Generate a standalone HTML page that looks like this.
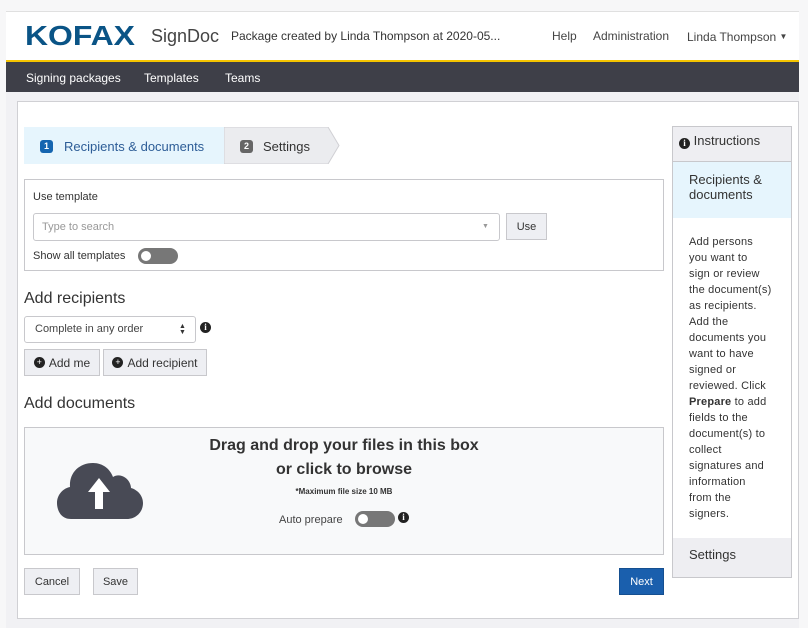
<!DOCTYPE html>
<html><head><meta charset="utf-8"><style>
*{box-sizing:border-box;margin:0;padding:0}
body{width:808px;height:628px;background:#f7f7f8;font-family:"Liberation Sans",sans-serif;color:#333;position:relative;overflow:hidden;font-size:12px}
.a{position:absolute}
.btn{position:absolute;background:#eeeff3;border:1px solid #c8c8cc;color:#333;font-size:12px;display:flex;align-items:center;justify-content:center}
.ic{display:inline-block;width:11px;height:11px;border-radius:50%;background:#222;color:#fff;font-size:9px;font-weight:bold;text-align:center;line-height:11px;font-family:"Liberation Serif",serif}
.tog{position:absolute;width:40px;height:16px;border-radius:8px;background:#777}
.tog:after{content:"";position:absolute;left:3px;top:3px;width:10px;height:10px;border-radius:50%;background:#fff}
</style></head><body>
<div class="a" style="left:6px;top:11px;width:793px;height:50px;background:#fff;border-top:1px solid #e0e0e0"></div>
<div class="a" style="left:25px;top:20px;font-size:28px;font-weight:900;color:#0a5486;letter-spacing:0px;transform:scaleX(1.14);transform-origin:left">KOFAX</div>
<div class="a" style="left:151px;top:26px;font-size:18px;color:#444">SignDoc</div>
<div class="a" style="left:231px;top:29px;font-size:12px;color:#333">Package created by Linda Thompson at 2020-05...</div>
<div class="a" style="left:552px;top:29px;font-size:12px;color:#444">Help</div>
<div class="a" style="left:593px;top:29px;font-size:12px;color:#444">Administration</div>
<div class="a" style="left:687px;top:30px;font-size:12px;color:#444">Linda Thompson <span style="font-size:8px;vertical-align:2px">▼</span></div>
<div class="a" style="left:6px;top:60px;width:793px;height:2px;background:#f5c400"></div>
<div class="a" style="left:6px;top:62px;width:793px;height:30px;background:#3e3f48"></div>
<div class="a" style="left:26px;top:71px;color:#fff;font-size:12px">Signing packages</div>
<div class="a" style="left:144px;top:71px;color:#fff;font-size:12px">Templates</div>
<div class="a" style="left:225px;top:71px;color:#fff;font-size:12px">Teams</div>
<div class="a" style="left:6px;top:92px;width:793px;height:536px;background:#f1f1f4"></div>
<div class="a" style="left:17px;top:101px;width:782px;height:518px;background:#fff;border:1px solid #d0d0d4"></div>
<!-- wizard -->
<div class="a" style="left:24px;top:127px;width:201px;height:37px;background:#e6f5fd"></div>
<div class="a" style="left:40px;top:140px;width:13px;height:13px;border-radius:3px;background:#1565b0;color:#fff;font-size:9px;text-align:center;line-height:13px;font-weight:bold">1</div>
<div class="a" style="left:64px;top:139px;font-size:13px;color:#2d5d97">Recipients &amp; documents</div>
<svg class="a" style="left:224px;top:127px" width="116" height="37"><polygon points="0,0 104,0 115,18.5 104,37 0,37" fill="#ebecef" stroke="#d0d0d4"/></svg>
<div class="a" style="left:240px;top:140px;width:13px;height:13px;border-radius:3px;background:#666;color:#fff;font-size:9px;text-align:center;line-height:13px;font-weight:bold">2</div>
<div class="a" style="left:263px;top:139px;font-size:13px;color:#333">Settings</div>
<!-- template -->
<div class="a" style="left:24px;top:179px;width:640px;height:92px;border:1px solid #c8c8cc"></div>
<div class="a" style="left:33px;top:191px;font-size:11px">Use template</div>
<div class="a" style="left:33px;top:213px;width:467px;height:28px;border:1px solid #c8c8cc;border-radius:3px"></div>
<div class="a" style="left:42px;top:221px;font-size:11px;color:#999">Type to search</div>
<div class="a" style="left:482px;top:223px;font-size:7px;color:#999">▼</div>
<div class="btn" style="left:506px;top:213px;width:41px;height:27px;font-size:11px">Use</div>
<div class="a" style="left:33px;top:250px;font-size:11px">Show all templates</div>
<div class="tog" style="left:138px;top:248px"></div>
<!-- recipients -->
<div class="a" style="left:24px;top:290px;font-size:16px;color:#333">Add recipients</div>
<div class="a" style="left:24px;top:316px;width:172px;height:27px;border:1px solid #c8c8cc;border-radius:3px;background:#fff"></div>
<div class="a" style="left:35px;top:323px;font-size:11px;color:#444">Complete in any order</div>
<div class="a" style="left:179px;top:324px;font-size:7px;line-height:6px;color:#333">▲<br>▼</div>
<span class="ic a" style="left:200px;top:322px">i</span>
<div class="btn" style="left:24px;top:349px;width:76px;height:27px"><span class="ic" style="margin-right:4px">+</span>Add me</div>
<div class="btn" style="left:103px;top:349px;width:104px;height:27px"><span class="ic" style="margin-right:4px">+</span>Add recipient</div>
<!-- documents -->
<div class="a" style="left:24px;top:395px;font-size:16px;color:#333">Add documents</div>
<div class="a" style="left:24px;top:427px;width:640px;height:128px;background:#f8f9fa;border:1px solid #c8c8cc"></div>
<svg class="a" style="left:57px;top:461px" width="86" height="59" viewBox="0 0 86 59"><path d="M14 58 C3 58 0 48 0 42 C0 33 7 27 13 26 C12 12 22 2 36 2 C46 2 53 8 56 16 C59 14 62 14 65 15 C71 17 74 23 74 27 C81 29 86 35 86 42 C86 51 79 58 70 58 Z" fill="#484a55"/><path d="M42 17 L31 31 L38 31 L38 48 L46 48 L46 31 L53 31 Z" fill="#fff"/></svg>
<div class="a" style="left:164px;top:434px;width:360px;text-align:center;font-size:16px;font-weight:bold;color:#333;line-height:24px">Drag and drop your files in this box<br>or click to browse</div>
<div class="a" style="left:164px;top:487px;width:360px;text-align:center;font-size:8px;font-weight:bold">*Maximum file size 10 MB</div>
<div class="a" style="left:279px;top:514px;font-size:11px;color:#444">Auto prepare</div>
<div class="tog" style="left:355px;top:511px"></div>
<span class="ic a" style="left:398px;top:512px">i</span>
<div class="btn" style="left:24px;top:568px;width:56px;height:27px;font-size:11px">Cancel</div>
<div class="btn" style="left:93px;top:568px;width:45px;height:27px;font-size:11px">Save</div>
<div class="btn" style="left:619px;top:568px;width:45px;height:27px;background:#1a5fad;border-color:#154f90;color:#fff;font-size:11px">Next</div>
<!-- instructions -->
<div class="a" style="left:672px;top:126px;width:120px;height:452px;border:1px solid #c8c8cc;background:#fff"></div>
<div class="a" style="left:673px;top:127px;width:118px;height:35px;background:#eeeef2;border-bottom:1px solid #c8c8cc"></div>
<div class="a" style="left:679px;top:133px;font-size:13px"><span class="ic" style="vertical-align:-1px">i</span> Instructions</div>
<div class="a" style="left:673px;top:162px;width:118px;height:56px;background:#e6f5fd"></div>
<div class="a" style="left:689px;top:172px;font-size:13px;line-height:15px">Recipients &amp;<br>documents</div>
<div class="a" style="left:689px;top:234px;font-size:11px;line-height:16px;white-space:nowrap;letter-spacing:0.2px">Add persons<br>you want to<br>sign or review<br>the document(s)<br>as recipients.<br>Add the<br>documents you<br>want to have<br>signed or<br>reviewed. Click<br><b>Prepare</b> to add<br>fields to the<br>document(s) to<br>collect<br>signatures and<br>information<br>from the<br>signers.</div>
<div class="a" style="left:673px;top:538px;width:118px;height:39px;background:#eeeef2"></div>
<div class="a" style="left:689px;top:547px;font-size:13px">Settings</div>
</body></html>
